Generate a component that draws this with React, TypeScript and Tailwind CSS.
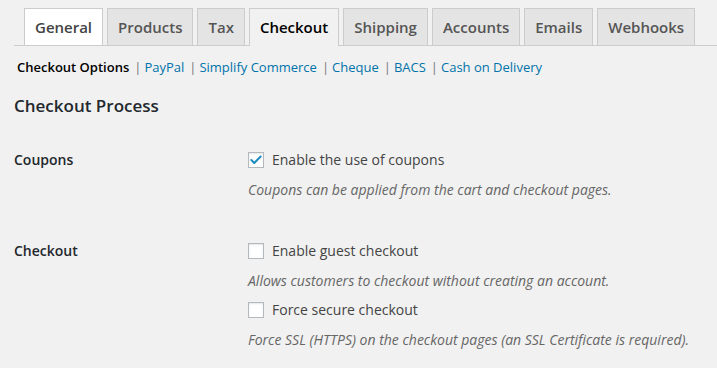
import { Check } from 'lucide-react';

const tabs = ['General', 'Products', 'Tax', 'Checkout', 'Shipping', 'Accounts', 'Emails', 'Webhooks'];
const sections = ['Checkout Options', 'PayPal', 'Simplify Commerce', 'Cheque', 'BACS', 'Cash on Delivery'];

function Box({ checked }: { checked?: boolean }) {
  return (
    <span className="w-4 h-4 border border-[#b4b9be] bg-white shadow-[inset_0_1px_2px_rgba(0,0,0,0.1)] flex items-center justify-center shrink-0">
      {checked && <Check size={14} strokeWidth={3.5} className="text-[#1e8cbe]" />}
    </span>
  );
}

function Option({ label, desc, checked }: { label: string; desc: string; checked?: boolean }) {
  return (
    <div className="flex flex-col">
      <label className="flex items-center gap-2 h-5 text-[14px] text-[#444]">
        <Box checked={checked} />
        {label}
      </label>
      <p className="mt-[10px] italic text-[14px] text-[#666] leading-5">{desc}</p>
    </div>
  );
}

export default function App() {
  return (
    <div className="w-[717px] h-[368px] bg-[#f1f1f1] overflow-hidden" style={{ fontFamily: '"Open Sans", sans-serif' }}>
      <nav className="ml-[14px] mt-2 pl-[10px] flex gap-[4px] border-b border-[#ccc]">
        {tabs.map((t) => {
          const active = t === 'Checkout';
          return (
            <div
              key={t}
              className={`h-[37px] px-[10px] flex items-center border border-b-0 border-[#ccc] text-[15px] font-semibold -mb-px ${
                active ? 'bg-[#f1f1f1] text-black h-[38px]' : t === 'General' ? 'bg-white text-[#444]' : 'bg-[#e4e4e4] text-[#555]'
              }`}
            >
              {t}
            </div>
          );
        })}
      </nav>
      <div className="ml-[17px] mt-[11px] flex items-center text-[13px] leading-5">
        {sections.map((s, i) => (
          <span key={s} className="flex">
            {i > 0 && <span className="text-[#777] ml-[5px] mr-[3px]">|</span>}
            {i === 0 ? (
              <span className="font-semibold text-black">{s}</span>
            ) : (
              <a className="text-[#0073aa]">{s}</a>
            )}
          </span>
        ))}
      </div>
      <h2 className="ml-[14px] mt-[16px] text-[17px] font-semibold text-[#23282d]">Checkout Process</h2>
      <div className="ml-[14px] mt-[31px] flex">
        <div className="w-[234px] text-[14px] font-semibold text-[#23282d] leading-5">Coupons</div>
        <Option label="Enable the use of coupons" desc="Coupons can be applied from the cart and checkout pages." checked />
      </div>
      <div className="ml-[14px] mt-[41px] flex">
        <div className="w-[234px] text-[14px] font-semibold text-[#23282d] leading-5">Checkout</div>
        <div className="flex flex-col gap-[9px]">
          <Option label="Enable guest checkout" desc="Allows customers to checkout without creating an account." />
          <Option label="Force secure checkout" desc="Force SSL (HTTPS) on the checkout pages (an SSL Certificate is required)." />
        </div>
      </div>
    </div>
  );
}
